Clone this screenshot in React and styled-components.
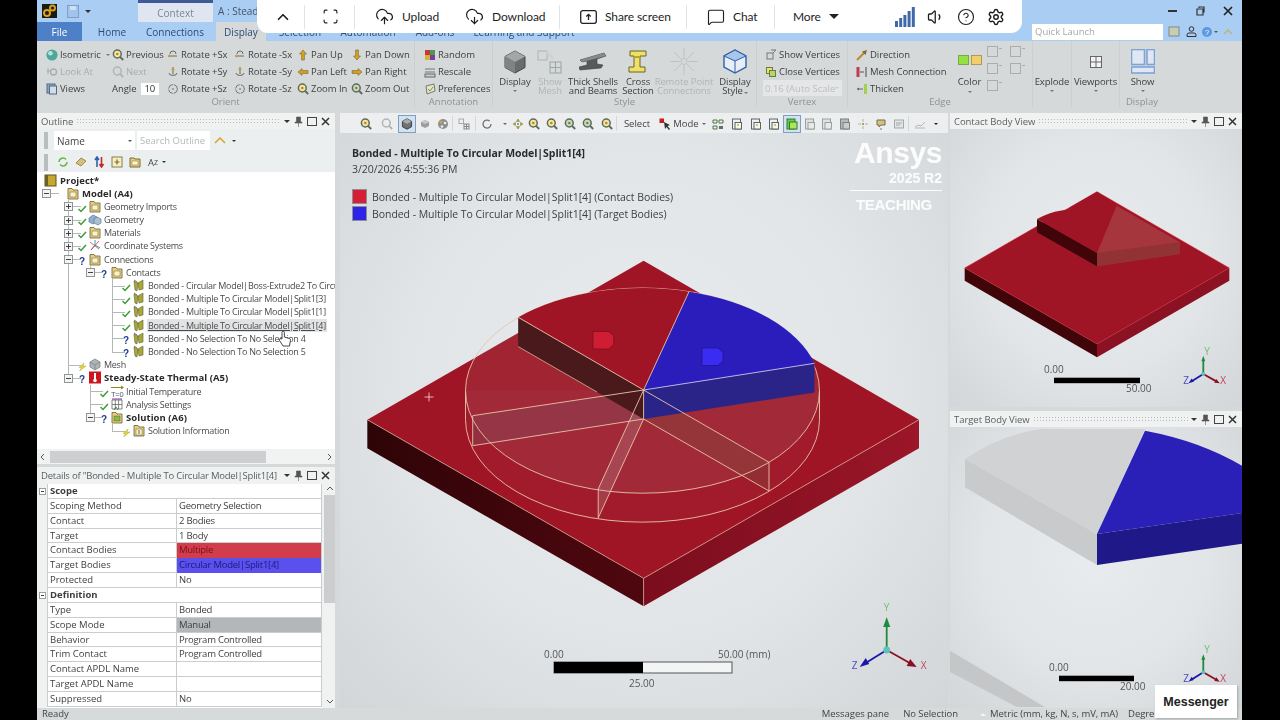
import React from 'react';
import styled, { createGlobalStyle } from 'styled-components';
import { ChevronUp, Scan, CloudUpload, CloudDownload, MessageSquare, Volume1, CircleHelp, Settings } from 'lucide-react';

const UI_FONT = '"Open Sans", "Noto Sans", sans-serif';

const Global = createGlobalStyle`
  html, body { margin: 0; padding: 0; background: #000; overflow: hidden; }
  * { box-sizing: border-box; }
`;

const Screen = styled.div`
  position: relative;
  width: 1280px;
  height: 720px;
  background: #000;
  overflow: hidden;
`;

const Win = styled.div`
  margin-left: 37px;
  width: 1205px;
  height: 720px;
  display: flex;
  flex-direction: column;
  background: #d5d9da;
  font-family: ${UI_FONT};
  font-size: 9.5px;
  color: #3e3e3e;
  overflow: hidden;
  filter: blur(0.35px);
`;

/* ---------- title + tabs ---------- */
const TitleBar = styled.div`
  height: 22px;
  flex: none;
  display: flex;
  align-items: center;
  background: #a9cdf3;
  padding-left: 5px;
`;
const CaretDown = styled.span`
  width: 0;
  height: 0;
  flex: none;
  display: inline-block;
  margin-left: ${p => p.$ml || 0}px;
  border-left: ${p => p.$s || 2.5}px solid transparent;
  border-right: ${p => p.$s || 2.5}px solid transparent;
  border-top: ${p => p.$s || 2.5}px solid ${p => p.$c || '#555'};
`;
const SaveIcon = styled.svg`
  margin: 0 6px 0 10px;
`;
const ContextTab = styled.div`
  width: 75px;
  height: 22px;
  margin-left: 47px;
  background: #dfe6f2;
  border-top: 3px solid #3f5a98;
  color: #7b8794;
  font-size: 10px;
  display: flex;
  align-items: center;
  justify-content: center;
`;
const TitleText = styled.div`
  margin-left: 5px;
  color: #44546a;
  font-size: 10px;
`;
const WinControls = styled.div`
  margin-left: auto;
  display: flex;
`;
const WinBtn = styled.div`
  width: 28px;
  height: 22px;
  display: flex;
  align-items: center;
  justify-content: center;
`;
const TabBar = styled.div`
  height: 19px;
  flex: none;
  display: flex;
  align-items: stretch;
  background: #a9cdf3;
`;
const Tab = styled.div`
  width: ${p => p.$w}px;
  margin-left: ${p => (p.$active ? 8 : 0)}px;
  display: flex;
  align-items: center;
  justify-content: center;
  font-size: 10px;
  color: ${p => (p.$file ? '#fff' : '#2f4a75')};
  background: ${p => (p.$file ? '#4d80c6' : p.$active ? '#d5d9da' : 'transparent')};
`;
const QuickWrap = styled.div`
  margin-left: auto;
  display: flex;
  align-items: center;
  padding-right: 4px;
`;
const QuickLaunch = styled.div`
  width: 131px;
  height: 16px;
  background: #fff;
  color: #a5a8ab;
  font-size: 9.5px;
  padding-left: 3px;
  line-height: 16px;
  margin-right: 3px;
`;

/* ---------- ribbon ---------- */
const Ribbon = styled.div`
  height: 69px;
  flex: none;
  display: flex;
  background: #d5d9da;
`;
const Group = styled.div`
  width: ${p => p.$w}px;
  flex: none;
  padding-top: 5px;
  display: flex;
  flex-direction: column;
  border-right: 1px solid ${p => (p.$last ? 'transparent' : '#cbcfd0')};
  margin-bottom: 3px;
`;
const GroupBody = styled.div`
  height: 50px;
  flex: none;
  display: flex;
  padding-left: ${p => p.$pl || 0}px;
`;
const GroupLabel = styled.div`
  height: 12px;
  line-height: 12px;
  text-align: center;
  font-size: 9.5px;
  color: #8e9293;
`;
const ToolGrid = styled.div`
  display: grid;
  grid-auto-flow: column;
  grid-template-rows: repeat(3, 17px);
  grid-template-columns: ${p => p.$cols};
`;
const Tool = styled.div`
  display: flex;
  align-items: center;
  gap: 2px;
  white-space: nowrap;
  letter-spacing: -0.05px;
  color: ${p => (p.$off ? '#a9acad' : '#3e3e3e')};
`;
const AngleBox = styled.span`
  width: 18px;
  height: 12px;
  background: #fff;
  margin-left: 3px;
  padding-left: 3px;
  line-height: 12px;
  color: #333;
`;
const BigTool = styled.div`
  width: ${p => p.$w}px;
  flex: none;
  display: flex;
  flex-direction: column;
  align-items: center;
  text-align: center;
  white-space: nowrap;
  line-height: 9px;
  letter-spacing: -0.1px;
  color: ${p => (p.$off ? '#b2b5b6' : '#3e3e3e')};
`;
const BigIcon = styled.div`
  height: 31px;
  flex: none;
  display: flex;
  align-items: center;
  justify-content: center;
`;
const BigCaret = styled.div`
  height: 9px;
  display: flex;
  align-items: center;
  justify-content: center;
`;
const AutoScale = styled.div`
  width: 79px;
  height: 16px;
  margin-left: -2px;
  background: #e4e6e7;
  color: #bcbec0;
  display: flex;
  align-items: center;
  justify-content: space-between;
  padding: 0 5px 0 2px;
  white-space: nowrap;
  overflow: hidden;
`;
const VertexStack = styled.div`
  display: grid;
  grid-template-rows: 17px 17px 17px;
  padding-left: 8px;
`;
const ColorCol = styled.div`
  width: 33px;
  flex: none;
  display: flex;
  flex-direction: column;
  align-items: center;
`;
const Swatches = styled.div`
  height: 31px;
  display: flex;
  align-items: center;
  gap: 2px;
`;
const Swatch = styled.span`
  width: 11px;
  height: 10px;
  background: ${p => p.$c};
  border: 1px solid ${p => p.$b};
`;
const EdgeBoxes = styled.div`
  margin: -3px 0 0 1px;
  display: grid;
  grid-template-columns: 23px 23px;
  grid-auto-rows: 17px;
  align-items: center;
`;
const EdgeBox = styled.span`
  position: relative;
  width: 11px;
  height: 11px;
  border: 1px solid #a9adae;
  display: block;
  &::after {
    content: '';
    position: absolute;
    left: 11px;
    top: 1px;
    width: 3px;
    border-top: 1px solid #a9adae;
  }
`;

/* ---------- main ---------- */
const Main = styled.div`
  flex: 1;
  min-height: 0;
  display: flex;
  padding-top: 3px;
`;
const LeftCol = styled.div`
  width: 298px;
  flex: none;
  display: flex;
  flex-direction: column;
`;
const CenterCol = styled.div`
  width: 608px;
  flex: none;
  margin-left: 5px;
  display: flex;
  flex-direction: column;
`;
const RightCol = styled.div`
  width: 292px;
  flex: none;
  margin-left: 2px;
  display: flex;
  flex-direction: column;
`;
const HeaderRow = styled.div`
  height: 16px;
  flex: none;
  display: flex;
  align-items: center;
  background: #f0f2f2;
  padding: 0 5px 0 4px;
  color: #5a5e60;
  font-size: 9.5px;
  white-space: nowrap;
`;
const HeaderTitle = styled.div`
  flex: ${p => (p.$fill ? '0 1 237px' : 'none')};
  letter-spacing: ${p => (p.$fill ? '-0.22px' : '-0.05px')};
  overflow: hidden;
`;
const Grip = styled.div`
  flex: 1;
  height: 7px;
  margin: 0 3px;
  background-image: radial-gradient(#b8bbbc 0.7px, transparent 0.8px);
  background-size: 3px 3px;
`;
const HeaderBtns = styled.div`
  display: flex;
  align-items: center;
  gap: 4px;
  flex: none;
  margin-left: ${p => (p.$auto ? 'auto' : 0)};
`;
const ToolRow = styled.div`
  height: ${p => p.$h}px;
  flex: none;
  display: flex;
  align-items: center;
  background: #ecefef;
  padding-left: 7px;
`;
const RowGrip = styled.div`
  width: 4px;
  height: 17px;
  flex: none;
  margin-right: 6px;
  background-image: radial-gradient(#b6b9ba 0.7px, transparent 0.8px);
  background-size: 2px 2px;
`;
const NameSelect = styled.div`
  width: 81px;
  height: 19px;
  background: #fff;
  color: #444;
  font-size: 10px;
  display: flex;
  align-items: center;
  justify-content: space-between;
  padding: 0 3px;
`;
const SearchBox = styled.div`
  width: 73px;
  height: 19px;
  margin: 0 3px 0 2px;
  background: #fff;
  color: #b4b7b8;
  font-size: 9.5px;
  line-height: 19px;
  padding-left: 3px;
`;
const IconSlot = styled.div`
  width: ${p => p.$w}px;
  flex: none;
  display: flex;
  align-items: center;
  justify-content: center;
  color: #444;
  white-space: nowrap;
  font-size: 9.5px;
  sub { font-size: 7px; }
`;
const TreePane = styled.div`
  position: relative;
  height: 277px;
  flex: none;
  padding-top: 1.5px;
  background: #fff;
  overflow: hidden;
`;
const TreeLine = styled.div`
  height: 13.2px;
  display: flex;
  white-space: nowrap;
  font-size: ${p => (p.$bold ? 9.5 : 9)}px;
  letter-spacing: ${p => (p.$bold ? '0.05px' : '-0.27px')};
  font-weight: ${p => (p.$bold ? 700 : 400)};
  color: ${p => (p.$bold ? '#2a2a2a' : '#4a4a4a')};
`;
const Indent = styled.div`
  position: relative;
  width: 22px;
  flex: none;
  &::before {
    content: ${p => (p.$line ? '""' : 'none')};
    position: absolute;
    left: 9px;
    top: 0;
    bottom: 0;
    border-left: 1px solid #b3b8b9;
  }
`;
const Elbow = styled.div`
  position: relative;
  width: 22px;
  flex: none;
  &::before {
    content: ${p => (p.$line ? '""' : 'none')};
    position: absolute;
    left: 9px;
    top: 0;
    height: ${p => (p.$line === 'half' ? '50%' : '100%')};
    border-left: 1px solid #b3b8b9;
  }
  &::after {
    content: '';
    position: absolute;
    left: 9px;
    right: 0;
    top: 50%;
    border-top: 1px solid #b3b8b9;
  }
`;
const Expander = styled.span`
  position: absolute;
  z-index: 1;
  left: 5px;
  top: 2.5px;
  width: 9px;
  height: 9px;
  background: #f4f4f4;
  border: 1px solid #8f9596;
  &::before {
    content: '';
    position: absolute;
    left: 1px;
    right: 1px;
    top: 3px;
    border-top: 1px solid #444;
  }
  &::after {
    content: ${p => (p.$plus ? '""' : 'none')};
    position: absolute;
    top: 1px;
    bottom: 1px;
    left: 3px;
    border-left: 1px solid #444;
  }
`;
const NodeSvg = styled.svg`
  width: 26px;
  height: 13px;
  flex: none;
  margin-left: -3px;
`;
const NodeText = styled.span`
  line-height: 13px;
  ${p => p.$sel && `
    background: #e2e3e4;
    text-decoration: underline;
    margin-left: -1px;
    padding: 0 1px;
  `}
`;
const HandCursor = styled.svg`
  position: absolute;
  left: 241px;
  top: 158px;
`;
const HScroll = styled.div`
  position: relative;
  height: 15px;
  flex: none;
  display: flex;
  align-items: center;
  justify-content: space-between;
  background: #f1f2f2;
  padding: 0 3px;
  margin-bottom: 3px;
`;
const HThumb = styled.div`
  position: absolute;
  left: 13px;
  width: 216px;
  height: 12px;
  background: #cdcfd0;
`;
const DetailsWrap = styled.div`
  flex: 1;
  min-height: 0;
  display: flex;
  background: #f0f2f2;
  padding-top: 1px;
  overflow: hidden;
`;
const Gutter = styled.div`
  width: 10px;
  flex: none;
  display: flex;
  flex-direction: column;
`;
const GutterCell = styled.div`
  height: 14.87px;
  display: flex;
  align-items: center;
  justify-content: center;
`;
const PlusBox = styled.span`
  width: 7px;
  height: 7px;
  border: 1px solid #9a9fa0;
  background: #fff;
  position: relative;
  &::before {
    content: '';
    position: absolute;
    left: 1px;
    right: 1px;
    top: 2px;
    border-top: 1px solid #444;
  }
`;
const PropTable = styled.div`
  width: 275px;
  flex: none;
  background: #fff;
`;
const PropRow = styled.div`
  height: 14.87px;
  display: grid;
  grid-template-columns: ${p => (p.$section ? '1fr' : '128px 145px')};
  border-bottom: 1px solid #c9cdce;
  border-left: 1px solid #c9cdce;
  border-right: 1px solid #c9cdce;
  line-height: 14.4px;
  white-space: nowrap;
`;
const PropCell = styled.div`
  padding-left: 2px;
  letter-spacing: ${p => (p.$val ? '-0.25px' : '0')};
  border-left: ${p => (p.$val ? '1px solid #c9cdce' : 'none')};
  background: ${p => p.$bg || 'transparent'};
  color: ${p => p.$c || '#3e3e3e'};
  font-weight: ${p => (p.$bold ? 700 : 400)};
`;
const VScroll = styled.div`
  width: 13px;
  flex: none;
  display: flex;
  flex-direction: column;
  align-items: center;
  margin-left: 1px;
  padding: 2px 0 4px;
`;
const VThumb = styled.div`
  width: 12px;
  height: 108px;
  margin: 4px 0 auto;
  background: #cbcdce;
`;

/* ---------- viewports ---------- */
const Viewport = styled.div`
  position: relative;
  flex: ${p => (p.$fixed ? 'none' : 1)};
  height: ${p => (p.$fixed ? `${p.$fixed}px` : 'auto')};
  min-height: 0;
  overflow: hidden;
  background: radial-gradient(ellipse at 50% 45%, #e9ecee 0%, #e2e5e7 55%, #d3d6d8 100%);
`;
const ViewSvg = styled.svg`
  position: absolute;
  left: 0;
  top: 0;
  font-family: ${UI_FONT};
`;
const Caption = styled.div`
  position: relative;
  padding: 12px 0 0 12px;
  color: #3e3e3e;
  font-size: 10.5px;
  letter-spacing: -0.05px;
  line-height: 16px;
`;
const CaptionTitle = styled.div`
  font-weight: 700;
  color: #2b2b2b;
`;
const Legend = styled.div`
  margin-top: 12px;
  display: flex;
  flex-direction: column;
  gap: 2px;
`;
const LegendRow = styled.div`
  display: flex;
  align-items: center;
  gap: 5px;
  height: 15px;
`;
const LegendSwatch = styled.span`
  width: 15px;
  height: 15px;
  background: ${p => p.$c};
  border: 1px solid #8d8f92;
`;
const Logo = styled.div`
  position: absolute;
  right: 6px;
  top: 5px;
  width: 92px;
  color: #fff;
  opacity: 0.92;
  font-family: "Liberation Sans", sans-serif;
  font-weight: 700;
  text-align: right;
  line-height: 1;
`;
const LogoName = styled.div`
  font-size: 30px;
  letter-spacing: -0.4px;
`;
const LogoYear = styled.div`
  font-size: 14px;
  margin-top: 3px;
`;
const LogoRule = styled.div`
  border-top: 1px solid #fff;
  margin: 5px 0 6px;
`;
const LogoEdition = styled.div`
  font-size: 15px;
  text-align: left;
  padding-left: 6px;
  letter-spacing: -0.3px;
`;
const Gap = styled.div`
  height: 4px;
  flex: none;
  background: #d5d9da;
`;
const ViewToolbar = styled(ToolRow)`
  padding: 1px 0 0 16px;
  height: 20px;
  background: #eceeef;
`;
const Highlight = styled.div`
  width: 18px;
  height: 18px;
  flex: none;
  display: flex;
  align-items: center;
  justify-content: center;
  border: 1px solid #7e9fc4;
  background: #d4e2f0;
`;
const ToolSep = styled.span`
  width: 1px;
  height: 15px;
  flex: none;
  margin-right: -1px;
  background: #d5d8d9;
`;

/* ---------- status bar ---------- */
const StatusBar = styled.div`
  height: 12px;
  flex: none;
  display: flex;
  align-items: center;
  background: #d6dadb;
  padding-left: 5px;
  font-size: 9.5px;
  line-height: 12px;
  letter-spacing: -0.05px;
  white-space: nowrap;
  color: #444;
`;
const StatusItem = styled.span`
  margin-left: ${p => p.$ml || 0}px;
`;
const UnitMark = styled.span`
  width: 0;
  height: 0;
  margin-left: 22px;
  margin-right: 4px;
  border-left: 3px solid transparent;
  border-right: 3px solid transparent;
  border-bottom: 3px solid #f4f5f5;
`;

/* ---------- meeting overlay ---------- */
const MeetBar = styled.div`
  position: absolute;
  left: 257px;
  top: 0;
  width: 765px;
  height: 33px;
  background: #fff;
  border-radius: 0 0 11px 11px;
  display: flex;
  align-items: center;
  font-family: Lato, sans-serif;
  font-size: 12px;
  letter-spacing: -0.1px;
  color: #1e1e1e;
`;
const MeetBtn = styled.div`
  width: ${p => p.$w}px;
  flex: none;
  height: 24px;
  display: flex;
  align-items: center;
  gap: 8px;
  padding-left: ${p => p.$pl}px;
  border-right: ${p => (p.$div ? '1px solid #e3e3e3' : 'none')};
`;
const MeetRight = styled.div`
  display: flex;
  align-items: center;
  gap: 12px;
  margin-left: 15px;
`;
const Messenger = styled.div`
  position: absolute;
  left: 1155px;
  top: 685px;
  width: 82px;
  height: 33px;
  background: #fff;
  box-shadow: 1px 1px 2px rgba(0, 0, 0, 0.25);
  display: flex;
  align-items: center;
  justify-content: center;
  font-family: "Liberation Sans", sans-serif;
  font-size: 12.5px;
  font-weight: 700;
  color: #222;
`;
const GlyphSvg = styled.svg`
  flex: none;
`;

/* ---------- small glyphs ---------- */
const zoomGlyph = (ring = '#5f6b58', fill = '#f3e5a6', dot = '#b98a22') => (
  <>
    <circle cx="5.3" cy="5" r="3.9" fill={fill} stroke={ring} strokeWidth="1.5" />
    <circle cx="5.3" cy="5" r="1.3" fill={dot} />
    <path d="M8.2 8l3 3" stroke={ring} strokeWidth="1.8" />
  </>
);
const arrow = (d, c = '#d9a21e') => <path d={d} fill={c} stroke="#5a5230" strokeWidth="0.5" />;

const GLYPHS = {
  sphere: <><circle cx="6" cy="6" r="5.6" fill="#4fa79b" /><circle cx="4.4" cy="4.2" r="2.3" fill="#b4e6de" /></>,
  zoom: zoomGlyph(),
  zoomOff: zoomGlyph('#b1b4b5', 'none', 'none'),
  zoomTeal: zoomGlyph('#5b6b62', '#cfd8b5', '#6f8a55'),
  rotX: <><path d="M3 5a3 3 0 0 1 6 0" fill="none" stroke="#6a6a5a" /><path d="M1 7h9" stroke="#77664a" /><path d="M1 7l2-2v4z" fill="#c8a440" /></>,
  rotY: <><path d="M6 1v7" stroke="#77664a" /><path d="M2 7a4 2.4 0 0 0 8 0" fill="none" stroke="#6a6a5a" /><path d="M6 1l2 3H4z" fill="#c8a440" /></>,
  rotZ: <><circle cx="6" cy="6" r="4.4" fill="none" stroke="#7b7b6b" strokeDasharray="6 1" /><circle cx="6" cy="6" r=".9" fill="#888" /></>,
  panUp: arrow('M6 1l3.5 4H7.4v6H4.6V5H2.5z'),
  panDown: arrow('M6 11L2.5 7h2.1V1h2.8v6h2.1z'),
  panLeft: arrow('M1 6l4-3.5v2.1h6v2.8H5v2.1z'),
  panRight: arrow('M11 6L7 2.5v2.1H1v2.8h6v2.1z'),
  lookAt: <><path d="M1 5h3M2 2v6" stroke="#a9acad" /><circle cx="7.5" cy="6" r="3" fill="none" stroke="#a9acad" strokeWidth="1.3" /></>,
  views: <><rect x="1" y="1" width="8" height="9" fill="#8ea6c2" stroke="#516a85" /><rect x="3.5" y="3" width="7" height="8" fill="#d2dde8" stroke="#516a85" /></>,
  random: <><rect x="1" y="1" width="5" height="5" fill="#c43a3a" /><rect x="6" y="1" width="5" height="5" fill="#4a9a50" /><rect x="1" y="6" width="5" height="5" fill="#d9b232" /><rect x="6" y="6" width="5" height="5" fill="#7a3e9c" /></>,
  rescale: <><path d="M1 3h10M1 6h10" stroke="#777" /><rect x="1" y="8" width="10" height="3" fill="#c9cfd2" stroke="#666" /></>,
  prefs: <><path d="M2 3l8-2 1 7-8 3z" fill="#e8e4c0" stroke="#777" /><path d="M4 6l2 2 3-4" fill="none" stroke="#5b9a50" /></>,
  showVert: <><rect x="2" y="4" width="6" height="6" fill="none" stroke="#777" /><path d="M8 4l3-3M6 1h5" stroke="#777" /></>,
  closeVert: <><rect x="1.5" y="1.5" width="6" height="6" fill="#e8e07a" stroke="#6a7d3a" /><rect x="4.5" y="4.5" width="6" height="6" fill="#b7d46a" stroke="#6a7d3a" /></>,
  direction: <><path d="M1 11l8-8" stroke="#b88d2a" strokeWidth="2" /><path d="M11 1L6 2.5 9.5 6z" fill="#7b6b3a" /></>,
  meshConn: <><rect x="0.5" y="1" width="3" height="10" fill="#c23b55" /><path d="M4 6h4" stroke="#555" /><rect x="9" y="1" width="2" height="10" fill="#8b9295" /></>,
  thicken: <><path d="M1 6h6" stroke="#666" /><path d="M3 4.5L1 6l2 1.5" fill="#666" /><rect x="8" y="1" width="3" height="10" fill="#9ed44a" /></>,
  refresh: <path d="M2 6a4 4 0 0 1 7-2.6M10 6a4 4 0 0 1-7 2.6" fill="none" stroke="#6cb84a" strokeWidth="1.5" />,
  eraser: <path d="M1 7l5-5 5 3-5 5z" fill="#d6bf7e" stroke="#a08b50" />,
  sort: <><path d="M4 11V2M2 4l2-3 2 3" fill="none" stroke="#2a62b8" strokeWidth="1.6" /><path d="M8.5 1v9M6.5 8l2 3 2-3" fill="none" stroke="#c62828" strokeWidth="1.6" /></>,
  plusBox: <><rect x="1" y="1" width="10" height="10" fill="#f6eec4" stroke="#8a7d45" /><path d="M3.5 6h5M6 3.5v5" stroke="#7a6a2a" strokeWidth="1.2" /></>,
  folder: <><path d="M1 3V2h4l1 1h5v8H1z" fill="#e6cf83" stroke="#7b6b35" /><rect x="3" y="5" width="6" height="4" fill="#fff7d2" stroke="#7b6b35" strokeWidth=".5" /></>,
  cube: <><path d="M6 .8l4.6 2.5v5.4L6 11.2 1.4 8.700V3.3z" fill="#6d7173" stroke="#3f4244" /><path d="M6 6L1.4 3.3 6 .8l4.6 2.5z" fill="#a7abad" /></>,
  cubeLt: <><path d="M6 2l4 2v4l-4 2-4-2V4z" fill="#9a9ea0" /><path d="M6 6L2 4l4-2 4 2z" fill="#c6c9cb" /></>,
  render: <><circle cx="6" cy="6" r="5" fill="#8b8f90" /><circle cx="4" cy="4" r="1.5" fill="#d8a23a" /><circle cx="8" cy="5" r="1.3" fill="#eee" /><circle cx="5" cy="8.5" r="1.3" fill="#eee" /></>,
  meshMini: <><rect x="1" y="1" width="4.5" height="4.5" fill="none" stroke="#aaa" /><rect x="6" y="6" width="5" height="5" fill="none" stroke="#888" /><path d="M8.5 6v5M6 8.5h5" stroke="#888" /></>,
  rotate: <path d="M10 6a4 4 0 1 1-1.4-3" fill="none" stroke="#6f7172" strokeWidth="1.3" />,
  panAll: <><path d="M6 1l1.6 2.5H4.4zM6 11l1.6-2.5H4.4zM1 6l2.5-1.6v3.2zM11 6L8.5 4.4v3.2z" fill="#c9a22d" stroke="#6d5f25" strokeWidth=".4" /><circle cx="6" cy="6" r="1" fill="#3a8" /></>,
  mode: <><rect x="0.5" y="0.5" width="4.5" height="4.5" fill="#c41d1d" /><path d="M5 4l6 3-2.5 1L11 11l-1 1-2.5-3L6 11z" fill="#333" /></>,
  filterA: <><path d="M1 2h4v3H1zM7 2h4v3H7zM1 8h4v3H1z" fill="none" stroke="#4a7a44" /><path d="M7 8h4v3H7z" fill="#6a6a6a" /></>,
  page: <><rect x="1.5" y="1" width="8" height="10" fill="#eef1f1" stroke="#5c6566" /><rect x="4" y="4.5" width="6.5" height="6.5" fill="#f7f7e8" stroke="#5c6566" /><path d="M6 7h2" stroke="#a08b2a" /></>,
  pageOn: <><rect x="1" y="1" width="8" height="10" fill="#66cc55" stroke="#2e7a2a" /><rect x="3.5" y="4" width="7.5" height="7" fill="#a8e65a" stroke="#2e7a2a" /></>,
  pageDim: <><rect x="1.5" y="1" width="8" height="10" fill="#dfe2e3" stroke="#9aa0a1" /><rect x="4" y="4.5" width="6.5" height="6.5" fill="#e8eaea" stroke="#9aa0a1" /></>,
  pageDark: <><rect x="1.5" y="1" width="8" height="10" fill="#b7babb" stroke="#7a7f80" /><rect x="4" y="4.5" width="6.5" height="6.5" fill="#c9cbcc" stroke="#7a7f80" /></>,
  spark: <><path d="M6 1v3M6 8v3M1 6h3M8 6h3" stroke="#b8b48a" strokeWidth="1" /><circle cx="6" cy="6" r="1" fill="#5fa04a" /></>,
  flag: <><path d="M2 2h8v5H6l-2 2V7H2z" fill="#d8c26a" stroke="#6d6d6d" /><path d="M5 11h2" stroke="#777" /></>,
  chart: <><rect x="1.5" y="2" width="9" height="8" fill="#e2e4e5" stroke="#a5a9aa" /><path d="M3 5h6M3 7h4" stroke="#a5a9aa" /></>,
  graph: <path d="M1 10h10M1 9l3-2 3 1 4-4" fill="none" stroke="#b4b7b8" />,
};

const Glyph = ({ name, size = 12 }) => (
  <GlyphSvg width={size} height={size} viewBox="0 0 12 12">{GLYPHS[name]}</GlyphSvg>
);

const HeaderIcons = ({ auto }) => (
  <HeaderBtns $auto={auto}>
    <CaretDown $s={3} $c="#333" />
    <svg width="9" height="11" viewBox="0 0 9 11"><path d="M2.5 1h4v5h1.5v1H1V6h1.5zM4.5 7v4" fill="#555" stroke="#555" strokeWidth=".6" /></svg>
    <svg width="10" height="9" viewBox="0 0 10 9"><rect x=".5" y=".5" width="9" height="8" fill="none" stroke="#444" /></svg>
    <svg width="9" height="9" viewBox="0 0 9 9"><path d="M1 1l7 7M8 1L1 8" stroke="#333" strokeWidth="1.5" /></svg>
  </HeaderBtns>
);

/* ---------- ribbon contents ---------- */
const ORIENT = [
  ['sphere', 'Isometric', false], ['lookAt', 'Look At', true], ['views', 'Views', false],
  ['zoom', 'Previous', false], ['zoomOff', 'Next', true], [null, 'Angle', false],
  ['rotX', 'Rotate +Sx'], ['rotY', 'Rotate +Sy'], ['rotZ', 'Rotate +Sz'],
  ['rotX', 'Rotate -Sx'], ['rotY', 'Rotate -Sy'], ['rotZ', 'Rotate -Sz'],
  ['panUp', 'Pan Up'], ['panLeft', 'Pan Left'], ['zoom', 'Zoom In'],
  ['panDown', 'Pan Down'], ['panRight', 'Pan Right'], ['zoomTeal', 'Zoom Out'],
];

const ShowMeshIcon = () => (
  <svg width="26" height="26" viewBox="0 0 26 26">
    <rect x="1" y="2" width="9" height="9" fill="none" stroke="#aeb2b3" />
    <path d="M10 2l6 8" stroke="#d0d3d4" strokeWidth="3" />
    <rect x="13" y="13" width="11" height="11" fill="none" stroke="#9ea3a4" />
    <path d="M18.5 13v11M13 18.5h11" stroke="#9ea3a4" />
  </svg>
);
const DisplayIcon = () => (
  <svg width="22" height="24" viewBox="0 0 22 24">
    <path d="M11 1l10 5.5v11L11 23 1 17.5V6.5z" fill="#6a6c6c" stroke="#444" />
    <path d="M11 12L1 6.5 11 1l10 5.5z" fill="#a4a7a7" />
    <path d="M11 12v11L1 17.5V6.5z" fill="#818383" />
  </svg>
);
const BeamIcon = () => (
  <svg width="28" height="20" viewBox="0 0 28 20">
    <path d="M1 8l24-7 2 3-9 3v5l6 1-2 3-21 2-1-3 8-2v-4L3 10z" fill="#565a5c" stroke="#3a3c3e" strokeWidth=".6" />
    <path d="M1 8l24-7 2 3-24 6z" fill="#858a8c" />
  </svg>
);
const SectionIcon = () => (
  <svg width="20" height="25" viewBox="0 0 20 25">
    <path d="M2 2h16v5h-6v11h5v5H1v-5h5V7H2z" fill="#efe06a" stroke="#6b6420" strokeWidth="1" />
    <path d="M6 7h6v2H6z" fill="#b3a635" />
  </svg>
);
const RemoteIcon = () => (
  <svg width="28" height="27" viewBox="0 0 28 27" stroke="#bfc2c3" strokeWidth="1">
    <path d="M14 0v10M14 17v10M0 13.5h10M18 13.5h10M4 4l7 7M17 16l7 7M24 4l-7 7M11 16l-7 7" />
    <circle cx="14" cy="13.5" r="3" fill="none" />
  </svg>
);
const StyleIcon = () => (
  <svg width="24" height="25" viewBox="0 0 24 25">
    <path d="M12 1l11 6v11l-11 6L1 18V7z" fill="#e7eef8" stroke="#2f5fa5" strokeWidth="1.4" />
    <path d="M12 12L1 7l11-6 11 6z" fill="#a9c6ea" stroke="#2f5fa5" />
    <path d="M12 12v12" stroke="#2f5fa5" />
  </svg>
);
const ViewportsIcon = () => (
  <svg width="12" height="12" viewBox="0 0 12 12"><rect x=".5" y=".5" width="11" height="11" fill="#f2f3f3" stroke="#666" /><path d="M6 .5v11M.5 6h11" stroke="#666" /></svg>
);
const ShowIcon = () => (
  <svg width="24" height="25" viewBox="0 0 24 25">
    <rect x=".5" y=".5" width="13" height="15" fill="#dfe7f3" stroke="#7fa3d6" strokeWidth="1.6" />
    <rect x="16" y=".5" width="7.5" height="15" fill="#dfe7f3" stroke="#7fa3d6" strokeWidth="1.6" />
    <rect x=".5" y="18" width="23" height="6" fill="#dfe7f3" stroke="#7fa3d6" strokeWidth="1.6" />
  </svg>
);

const StyleTools = [
  { w: 36, label: 'Display', icon: <DisplayIcon />, caret: true },
  { w: 34, label: <>Show<br />Mesh</>, icon: <ShowMeshIcon />, off: true },
  { w: 52, label: <>Thick Shells<br />and Beams</>, icon: <BeamIcon /> },
  { w: 38, label: <>Cross<br />Section</>, icon: <SectionIcon /> },
  { w: 54, label: <>Remote Point<br />Connections</>, icon: <RemoteIcon />, off: true },
  { w: 48, label: <>Display<br />Style<CaretDown $c="#777" $ml={1} /></>, icon: <StyleIcon /> },
];

const RibbonBar = () => (
  <Ribbon>
    <Group $w={378}>
      <GroupBody $pl={9}>
        <ToolGrid $cols="66px 55px 67px 63px 54px auto">
          {ORIENT.map(([icon, label, off], i) => (
            <Tool key={i} $off={off}>
              {icon && <Glyph name={icon} />}
              {label}
              {i === 0 && <CaretDown $c="#777" $ml={3} />}
              {i === 5 && <AngleBox>10</AngleBox>}
            </Tool>
          ))}
        </ToolGrid>
      </GroupBody>
      <GroupLabel>Orient</GroupLabel>
    </Group>
    <Group $w={78}>
      <GroupBody $pl={9}>
        <ToolGrid $cols="auto">
          <Tool><Glyph name="random" />Random</Tool>
          <Tool><Glyph name="rescale" />Rescale</Tool>
          <Tool><Glyph name="prefs" />Preferences</Tool>
        </ToolGrid>
      </GroupBody>
      <GroupLabel>Annotation</GroupLabel>
    </Group>
    <Group $w={264}>
      <GroupBody $pl={4}>
        {StyleTools.map((t, i) => (
          <BigTool key={i} $w={t.w} $off={t.off}>
            <BigIcon>{t.icon}</BigIcon>
            <span>{t.label}</span>
            {t.caret && <BigCaret><CaretDown $c="#777" /></BigCaret>}
          </BigTool>
        ))}
      </GroupBody>
      <GroupLabel>Style</GroupLabel>
    </Group>
    <Group $w={91}>
      <GroupBody>
        <VertexStack>
          <Tool><Glyph name="showVert" />Show Vertices</Tool>
          <Tool><Glyph name="closeVert" />Close Vertices</Tool>
          <AutoScale>0.16 (Auto Scale<CaretDown $c="#c9cbcc" /></AutoScale>
        </VertexStack>
      </GroupBody>
      <GroupLabel>Vertex</GroupLabel>
    </Group>
    <Group $w={185}>
      <GroupBody $pl={8}>
        <ToolGrid $cols="97px">
          <Tool><Glyph name="direction" />Direction</Tool>
          <Tool><Glyph name="meshConn" />Mesh Connection</Tool>
          <Tool><Glyph name="thicken" />Thicken</Tool>
        </ToolGrid>
        <ColorCol>
          <Swatches><Swatch $c="#93e240" $b="#7da64a" /><Swatch $c="#efce6c" $b="#b09a50" /></Swatches>
          Color
          <BigCaret><CaretDown $c="#777" /></BigCaret>
        </ColorCol>
        <EdgeBoxes>
          <EdgeBox /><EdgeBox /><EdgeBox /><EdgeBox /><EdgeBox />
        </EdgeBoxes>
      </GroupBody>
      <GroupLabel>Edge</GroupLabel>
    </Group>
    <Group $w={39}>
      <GroupBody>
        <BigTool $w={38}><BigIcon />Explode<BigCaret><CaretDown $c="#777" /></BigCaret></BigTool>
      </GroupBody>
    </Group>
    <Group $w={48}>
      <GroupBody>
        <BigTool $w={47}><BigIcon><ViewportsIcon /></BigIcon>Viewports<BigCaret><CaretDown $c="#777" /></BigCaret></BigTool>
      </GroupBody>
    </Group>
    <Group $w={45} $last>
      <GroupBody>
        <BigTool $w={45}><BigIcon><ShowIcon /></BigIcon>Show<BigCaret><CaretDown $c="#777" /></BigCaret></BigTool>
      </GroupBody>
      <GroupLabel>Display</GroupLabel>
    </Group>
  </Ribbon>
);

/* ---------- tree ---------- */
const STATUS = {
  check: <path d="M.5 9l2.5 2.5L8 6" fill="none" stroke="#3f9a3a" strokeWidth="1.5" />,
  q: <text x="1" y="12" fontSize="10" fontWeight="700" fill="#1f3f8f" fontFamily="Liberation Sans">?</text>,
  bolt: <path d="M6 5L1 9.5h2.5L1.5 13 8 8H5z" fill="#dfd43a" stroke="#a89e20" strokeWidth=".4" />,
};
const folderBase = <path d="M12 3V1.5h4l1 1.5h5v9H12z" fill="#e6cf83" stroke="#6d5f2c" strokeWidth=".8" />;
const NODE = {
  project: <><rect x="11" y="1" width="11" height="11" fill="#c7a72f" stroke="#5d5220" /><rect x="11" y="1" width="3" height="11" fill="#6d5f25" /></>,
  folder: <>{folderBase}<rect x="14" y="5" width="6" height="5" fill="#f8f2cf" stroke="#6d5f2c" strokeWidth=".5" /></>,
  geometry: <><path d="M11 5l4-3 4 2v4l-4 3-4-2z" fill="#8fb0d0" stroke="#4c6b8d" strokeWidth=".6" /><path d="M16 6l3-2 4 2v4l-3 2-4-2z" fill="#aebfd0" stroke="#4c6b8d" strokeWidth=".6" /></>,
  coords: <><path d="M17 1v5M13 11l4-5 5 3" fill="none" stroke="#2aa9a0" /><path d="M12 3l9 7M21 2l-8 9" stroke="#c93a5a" strokeWidth=".8" /></>,
  contact: <><path d="M12 2l4 2-1 8-2-1zM21 1l-5 3 1 7 4-1z" fill="#a8a83a" stroke="#5f5f2a" strokeWidth=".6" /><path d="M12 1l3 2" stroke="#777" /></>,
  mesh: <><path d="M12 4l5-3 5 3v5l-5 3-5-3z" fill="#aeb4b8" stroke="#727a7e" strokeWidth=".7" /><path d="M12 4l5 3 5-3M17 7v5" stroke="#727a7e" strokeWidth=".6" fill="none" /></>,
  thermal: <><rect x="11" y="0.5" width="12" height="12" fill="#cc1520" /><rect x="16" y="2" width="2" height="7" fill="#fff" /><circle cx="17" cy="9.5" r="1.8" fill="#fff" /></>,
  temp: <><path d="M11 2.500h10" stroke="#8a8a2a" /><path d="M24 2.500l-3-2v4z" fill="#8a8a2a" /><text x="11" y="12" fontSize="7.5" fill="#4a5a6a" fontFamily="Liberation Sans">T=0</text></>,
  settings: <><path d="M12 2h10v9H12zM15.3 2v9M18.6 2v9M12 6.5h10" fill="none" stroke="#555" strokeWidth=".7" /><path d="M12 1h10" stroke="#7a3a9a" /><path d="M14 12l2-3 2 3" stroke="#3a8a3a" fill="none" /></>,
  solution: <>{folderBase}<rect x="14" y="5" width="6" height="5" fill="#8ab84a" stroke="#4d6a2a" strokeWidth=".5" /></>,
  info: <>{folderBase}<rect x="14" y="5" width="6" height="6" fill="#fbf7dc" stroke="#6d5f2c" strokeWidth=".5" /><path d="M17 6v4" stroke="#555" /></>,
};

const BONDED = 'Bonded - ';
const TREE = [
  { d: -1, icon: 'project', text: 'Project*', bold: true },
  { d: 0, exp: 'minus', icon: 'folder', text: 'Model (A4)', bold: true },
  { d: 1, conn: 'full', exp: 'plus', st: 'check', icon: 'folder', text: 'Geometry Imports' },
  { d: 1, conn: 'full', exp: 'plus', st: 'check', icon: 'geometry', text: 'Geometry' },
  { d: 1, conn: 'full', exp: 'plus', st: 'check', icon: 'folder', text: 'Materials' },
  { d: 1, conn: 'full', exp: 'plus', st: 'check', icon: 'coords', text: 'Coordinate Systems' },
  { d: 1, conn: 'full', exp: 'minus', st: 'q', icon: 'folder', text: 'Connections' },
  { d: 2, lines: [0, 1], conn: 'half', exp: 'minus', st: 'q', icon: 'folder', text: 'Contacts' },
  { d: 3, lines: [0, 1, 0], conn: 'full', st: 'check', icon: 'contact', text: BONDED + 'Circular Model|Boss-Extrude2 To Circular Model|Split1[1]' },
  { d: 3, lines: [0, 1, 0], conn: 'full', st: 'check', icon: 'contact', text: BONDED + 'Multiple To Circular Model|Split1[3]' },
  { d: 3, lines: [0, 1, 0], conn: 'full', st: 'check', icon: 'contact', text: BONDED + 'Multiple To Circular Model|Split1[1]' },
  { d: 3, lines: [0, 1, 0], conn: 'full', st: 'check', icon: 'contact', text: BONDED + 'Multiple To Circular Model|Split1[4]', sel: true },
  { d: 3, lines: [0, 1, 0], conn: 'full', st: 'q', icon: 'contact', text: BONDED + 'No Selection To No Selection 4' },
  { d: 3, lines: [0, 1, 0], conn: 'half', st: 'q', icon: 'contact', text: BONDED + 'No Selection To No Selection 5' },
  { d: 1, conn: 'full', st: 'bolt', icon: 'mesh', text: 'Mesh' },
  { d: 1, conn: 'half', exp: 'minus', st: 'q', icon: 'thermal', text: 'Steady-State Thermal (A5)', bold: true },
  { d: 2, lines: [0, 0], conn: 'full', st: 'check', icon: 'temp', text: 'Initial Temperature' },
  { d: 2, lines: [0, 0], conn: 'full', st: 'check', icon: 'settings', text: 'Analysis Settings' },
  { d: 2, lines: [0, 0], conn: 'half', exp: 'minus', st: 'q', icon: 'solution', text: 'Solution (A6)', bold: true },
  { d: 3, lines: [0, 0, 0], conn: 'half', st: 'bolt', icon: 'info', text: 'Solution Information' },
];

const TreeRow = ({ row }) => (
  <TreeLine $bold={row.bold}>
    {(row.lines || (row.d > 0 ? [0] : [])).map((on, i) => <Indent key={i} $line={on} />)}
    {row.d >= 0 && (
      <Elbow $line={row.conn}>{row.exp && <Expander $plus={row.exp === 'plus'} />}</Elbow>
    )}
    <NodeSvg viewBox="0 0 26 13">{row.st && STATUS[row.st]}{NODE[row.icon]}</NodeSvg>
    <NodeText $sel={row.sel}>{row.text}</NodeText>
  </TreeLine>
);

/* ---------- details ---------- */
const RED_CELL = { $bg: '#d13d4b', $c: '#7c0f1c' };
const BLUE_CELL = { $bg: '#5a50ee', $c: '#1c1a78' };
const DETAILS = [
  { section: 'Scope' },
  { k: 'Scoping Method', v: 'Geometry Selection' },
  { k: 'Contact', v: '2 Bodies' },
  { k: 'Target', v: '1 Body' },
  { k: 'Contact Bodies', v: 'Multiple', cell: RED_CELL },
  { k: 'Target Bodies', v: 'Circular Model|Split1[4]', cell: BLUE_CELL },
  { k: 'Protected', v: 'No' },
  { section: 'Definition' },
  { k: 'Type', v: 'Bonded' },
  { k: 'Scope Mode', v: 'Manual', cell: { $bg: '#b4b7ba' } },
  { k: 'Behavior', v: 'Program Controlled' },
  { k: 'Trim Contact', v: 'Program Controlled' },
  { k: 'Contact APDL Name', v: '' },
  { k: 'Target APDL Name', v: '' },
  { k: 'Suppressed', v: 'No' },
];

/* ---------- drawings ---------- */
const Triad = ({ x, y, s = 1 }) => {
  const small = s < 1;
  return (
    <g>
      <path d={`M${x} ${y}V${y - 26 * s}`} stroke="#1f8a3c" strokeWidth="1.8" />
      <path d={`M${x} ${y - 33 * s}l${3.5 * s} ${10 * s}h${-7 * s}z`} fill="#1f8a3c" />
      <path d={`M${x} ${y}L${x - 21 * s} ${y + 13 * s}`} stroke="#1717a8" strokeWidth="1.8" />
      <path d={`M${x - 27 * s} ${y + 17 * s}l${6 * s} ${-9 * s}l${3.5 * s} ${6 * s}z`} fill="#1717a8" />
      <path d={`M${x} ${y}L${x + 23 * s} ${y + 13 * s}`} stroke="#8a1020" strokeWidth="1.8" />
      <path d={`M${x + 30 * s} ${y + 17 * s}l${-10 * s} ${-1 * s}l${3.5 * s} ${-7 * s}z`} fill="#8a1020" />
      <circle cx={x} cy={y} r={3.5 * s} fill="#5fc2b8" />
      <text x={x + (small ? 1 : -3)} y={y - (small ? 19 : 39)} fill="#6fbf6f" fontSize="10">Y</text>
      <text x={x - (small ? 20 : 35)} y={y + (small ? 10 : 19)} fill="#4a4ac8" fontSize="10">Z</text>
      <text x={x + (small ? 17 : 34)} y={y + (small ? 10 : 19)} fill="#c8405a" fontSize="10">X</text>
    </g>
  );
};

const EDGE = '#e8c5a8';
const MainModel = () => (
  <ViewSvg width="608" height="574" viewBox="340 134 608 574">
    <defs>
      <linearGradient id="plateL" x1="0" x2="1" y1="0" y2="0">
        <stop offset="0" stopColor="#2e0407" /><stop offset="1" stopColor="#50070f" />
      </linearGradient>
      <linearGradient id="plateR" x1="0" x2="1" y1="0" y2="0">
        <stop offset="0" stopColor="#7a0d1d" /><stop offset="1" stopColor="#9b1628" />
      </linearGradient>
      <clipPath id="plateTop">
        <path d="M643.6 261.7L919 420.7 643.6 579.3 367.3 420.7z" />
      </clipPath>
    </defs>
    <path d="M367.3 420.7L643.6 579.3V607.3L367.3 449.3z" fill="url(#plateL)" />
    <path d="M919 420.7L643.6 579.3V607.3L919 449.3z" fill="url(#plateR)" />
    <path d="M643.6 261.7L919 420.7 643.6 579.3 367.3 420.7z" fill="#a01526" />
    <path d="M367.3 420.7L643.6 579.3 919 420.7M643.6 579.3V607.3" fill="none" stroke={EDGE} strokeOpacity=".75" strokeWidth=".8" />

    {/* transparent part of the disc */}
    <g clipPath="url(#plateTop)">
      <path d="M465.5 391.6V420.6A177 102.6 0 0 0 819.5 420.6V391.6z" fill="#c9a0a0" fillOpacity=".05" />
      <ellipse cx="642.5" cy="391.6" rx="177" ry="102.6" fill="#a88a8a" fillOpacity=".13" />
      <path d="M643.6 391L472.7 416.7V446.7L643.6 420z" fill="#8a3f50" fillOpacity=".55" />
      <path d="M643.6 391L769 463.3V492L643.6 420z" fill="#88403a" fillOpacity=".5" />
      <path d="M643.6 391L598.2 490V519L643.6 420z" fill="#b89098" fillOpacity=".28" />
    </g>
    <ellipse cx="642.5" cy="391.6" rx="177" ry="102.6" fill="none" stroke={EDGE} strokeWidth=".9" />
    <path d="M465.5 391.6V420.6A177 102.6 0 0 0 819.5 420.6V391.6" fill="none" stroke={EDGE} strokeWidth=".9" />

    {/* solid sectors */}
    <path d="M518.2 318.3V347.6L643.6 420V391z" fill="#4a191c" />
    <path d="M643.6 391L814.5 364.3V393.5L643.6 420z" fill="#2a2488" />
    <path d="M643.6 391L518.2 318.3A177 102.6 0 0 1 689 292.7z" fill="#a01526" />
    <path d="M643.6 391L689 292.7A177 102.6 0 0 1 814.5 364.3z" fill="#2a1dbb" />
    <path d="M518.2 318.3L643.6 391 689 292.7" fill="none" stroke={EDGE} strokeWidth=".9" />
    <path d="M643.6 391L814.5 364.3" fill="none" stroke="#c8c8ee" strokeWidth=".9" />
    <path d="M518.2 347.6L597 393" fill="none" stroke={EDGE} strokeWidth=".7" />

    {/* wedge edges run across the solids */}
    <path d="M643.6 391L472.7 416.7V446.7L643.6 420M643.6 391L769 463.3V492L643.6 420M643.6 391L598.2 490V519L643.6 420M643.6 391V420" fill="none" stroke={EDGE} strokeWidth=".9" />

    <path d="M593 332.5H609L613.8 337V345.5L609 350H593z" fill="#cf1d33" stroke="#6d1019" strokeWidth=".7" />
    <path d="M702 349H718L723 353.5V362L718 366.5H702z" fill="#3a2cf2" stroke="#1d1780" strokeWidth=".7" />
    <path d="M429 393.5v9M424.5 398h9" stroke="#f3d9cf" strokeWidth=".8" />

    {/* scale bar */}
    <rect x="554" y="663" width="178" height="11" fill="#f3f4f4" stroke="#555" />
    <rect x="554" y="663" width="89" height="11" fill="#000" />
    <text x="544" y="659" fill="#555" fontSize="10">0.00</text>
    <text x="718" y="659" fill="#555" fontSize="10">50.00 (mm)</text>
    <text x="629" y="688" fill="#555" fontSize="10">25.00</text>
    <Triad x={886.7} y={651} />
  </ViewSvg>
);

const ContactModel = () => (
  <ViewSvg width="292" height="278" viewBox="950 130 292 278">
    <path d="M964.7 269L1097 345v13.3L964.7 281.7z" fill="#3f0509" />
    <path d="M1229.3 269L1097 345v13.3l132.3-76.6z" fill="#8a1222" />
    <path d="M1097 192.7L1229.3 269 1097 345 964.7 269z" fill="#a01526" stroke="#d02030" strokeWidth=".5" />
    <path d="M1037 220v13.3L1097 267.3V254z" fill="#3f0509" />
    <path d="M1037 220Q1050 213 1060 211.700T1070 208.300L1097 192.700 1116.700 205 1097 254z" fill="#a01526" />
    <path d="M1116.700 206.700L1180 243.300 1180 255 1097 267.300V254z" fill="#a5363e" />
    <path d="M1097 254L1180 243.300V255L1097 267.300z" fill="#913235" />
    <text x="1044" y="374" fill="#555" fontSize="10">0.00</text>
    <rect x="1054" y="378.7" width="86" height="5.5" fill="#000" />
    <text x="1126" y="393" fill="#555" fontSize="10">50.00</text>
    <Triad x={1203.3} y={375} s={0.55} />
  </ViewSvg>
);

const TargetModel = () => (
  <ViewSvg width="292" height="280" viewBox="950 428 292 280">
    <path d="M965 460Q1000 436 1040 430H1145L1097 535z" fill="#d0d2d3" />
    <path d="M965 460V488.3L1097 566V535z" fill="#c8cacb" />
    <path d="M950 651.7L1045 708H1017L950 673z" fill="#c4c6c7" />
    <path d="M1097 535L1145 431.700Q1200 442 1242 466.700V514z" fill="#2a20b8" />
    <path d="M1097 535L1242 514V544.700L1097 566z" fill="#1f1888" />
    <text x="1049" y="672" fill="#555" fontSize="10">0.00</text>
    <rect x="1059" y="676.7" width="75" height="5.5" fill="#000" />
    <text x="1120" y="691" fill="#555" fontSize="10">20.00</text>
    <Triad x={1203.3} y={673.3} s={0.55} />
  </ViewSvg>
);

const VIEW_TOOLS = [
  ['cubeLt', 18], ['render', 18], ['sep'], ['meshMini', 23], ['sep'], ['rotate', 23], ['caret', 13], ['panAll', 14],
  ['zoom', 18], ['zoom', 17], ['zoomTeal', 19], ['zoomTeal', 18], ['zoom', 19], ['sep'],
];
const VIEW_TOOLS_2 = [
  ['filterA', 20], ['page', 18], ['page', 19], ['page', 18],
];
const VIEW_TOOLS_3 = [
  ['pageDim', 17], ['pageDim', 18], ['pageDark', 17], ['spark', 19], ['flag', 18], ['chart', 18], ['sep'], ['graph', 24],
];

const ToolGlyph = ({ name, w }) => {
  if (name === 'sep') return <ToolSep />;
  return <IconSlot $w={w}>{name === 'caret' ? <CaretDown $c="#666" /> : <Glyph name={name} />}</IconSlot>;
};

export default function App() {
  return (
    <Screen>
      <Global />
      <Win>
        <TitleBar>
          <svg width="15" height="14" viewBox="0 0 15 14">
            <rect width="15" height="14" fill="#1a1a10" />
            <circle cx="5" cy="9" r="3" fill="none" stroke="#e0a020" strokeWidth="2" />
            <circle cx="10.5" cy="4" r="2.5" fill="none" stroke="#d0a020" strokeWidth="2" />
          </svg>
          <SaveIcon width="12" height="13" viewBox="0 0 12 13">
            <rect x=".5" y=".5" width="11" height="12" fill="#a3c4ea" stroke="#7d9fc9" />
            <rect x="3" y="1" width="6" height="4" fill="#cfe0f4" />
          </SaveIcon>
          <CaretDown $s={3} $c="#333" />
          <ContextTab>Context</ContextTab>
          <TitleText>A : Steady-State Thermal - Mechanical</TitleText>
          <WinControls>
            <WinBtn><svg width="9" height="2"><rect width="9" height="2" fill="#333" /></svg></WinBtn>
            <WinBtn><svg width="9" height="10" viewBox="0 0 9 10"><path d="M3 2V1h5v5H7M1 3h6v6H1z" fill="none" stroke="#333" strokeWidth="1.2" /></svg></WinBtn>
            <WinBtn><svg width="10" height="10" viewBox="0 0 10 10"><path d="M1 1l8 8M9 1L1 9" stroke="#222" strokeWidth="1.7" /></svg></WinBtn>
          </WinControls>
        </TitleBar>
        <TabBar>
          <Tab $w={45} $file>File</Tab>
          <Tab $w={60}>Home</Tab>
          <Tab $w={66}>Connections</Tab>
          <Tab $w={50} $active>Display</Tab>
          <Tab $w={68}>Selection</Tab>
          <Tab $w={68}>Automation</Tab>
          <Tab $w={66}>Add-ons</Tab>
          <Tab $w={112}>Learning and Support</Tab>
          <QuickWrap>
            <QuickLaunch>Quick Launch</QuickLaunch>
            <IconSlot $w={16}><svg width="12" height="11" viewBox="0 0 12 11"><rect x="1" y="1" width="10" height="9" fill="#c8cdb0" stroke="#7c8a8a" /></svg></IconSlot>
            <IconSlot $w={18}><svg width="11" height="11" viewBox="0 0 11 11"><circle cx="5.5" cy="3" r="2.3" fill="none" stroke="#333" /><path d="M1 10.5V9q0-2 2-2h5q2 0 2 2v1.5z" fill="none" stroke="#333" /></svg></IconSlot>
            <IconSlot $w={14}><svg width="10" height="10" viewBox="0 0 10 10"><circle cx="5" cy="5" r="5" fill="#5b9ae0" /><text x="3" y="8" fontSize="7.5" fill="#fff" fontFamily="Liberation Sans">?</text></svg></IconSlot>
            <CaretDown $c="#555" />
            <IconSlot $w={20}><svg width="10" height="6" viewBox="0 0 10 6"><path d="M1 5l4-4 4 4" fill="none" stroke="#b9b77a" strokeWidth="1.5" /></svg></IconSlot>
          </QuickWrap>
        </TabBar>

        <RibbonBar />

        <Main>
          <LeftCol>
            <HeaderRow>
              <HeaderTitle>Outline</HeaderTitle>
              <Grip />
              <HeaderIcons />
            </HeaderRow>
            <ToolRow $h={23}>
              <RowGrip />
              <NameSelect>Name<CaretDown $c="#555" /></NameSelect>
              <SearchBox>Search Outline</SearchBox>
              <IconSlot $w={14}><svg width="12" height="7" viewBox="0 0 12 7"><path d="M1 6l5-5 5 5" fill="none" stroke="#d9a43a" strokeWidth="1.6" /></svg></IconSlot>
              <IconSlot $w={14}><CaretDown $c="#333" /></IconSlot>
            </ToolRow>
            <ToolRow $h={20}>
              <RowGrip />
              {['refresh', 'eraser', 'sort', 'plusBox', 'folder'].map(n => <IconSlot key={n} $w={18}><Glyph name={n} /></IconSlot>)}
              <IconSlot $w={18}>A<sub>Z</sub></IconSlot>
              <CaretDown $c="#333" />
            </ToolRow>
            <TreePane>
              {TREE.map((row, i) => <TreeRow key={i} row={row} />)}
              <HandCursor width="14" height="17" viewBox="0 0 14 17">
                <path d="M4 9V2.5a1.2 1.2 0 0 1 2.4 0V7l5 1.5q1.500.5 1 2L11.500 16H5L1.500 10.500q-.8-1.500 1-1.800z" fill="#fff" stroke="#333" strokeWidth=".9" />
              </HandCursor>
            </TreePane>
            <HScroll>
              <svg width="5" height="8" viewBox="0 0 5 8"><path d="M4 1L1 4l3 3" fill="none" stroke="#555" /></svg>
              <HThumb />
              <svg width="5" height="8" viewBox="0 0 5 8"><path d="M1 1l3 3-3 3" fill="none" stroke="#555" /></svg>
            </HScroll>
            <HeaderRow>
              <HeaderTitle $fill>Details of "Bonded - Multiple To Circular Model|Split1[4] - Contact Region"</HeaderTitle>
              <HeaderIcons auto />
            </HeaderRow>
            <DetailsWrap>
              <Gutter>
                {DETAILS.map((r, i) => <GutterCell key={i}>{r.section && <PlusBox />}</GutterCell>)}
              </Gutter>
              <PropTable>
                {DETAILS.map((r, i) => (r.section ? (
                  <PropRow key={i} $section><PropCell $bold>{r.section}</PropCell></PropRow>
                ) : (
                  <PropRow key={i}>
                    <PropCell>{r.k}</PropCell>
                    <PropCell $val {...(r.cell || {})}>{r.v}</PropCell>
                  </PropRow>
                )))}
              </PropTable>
              <VScroll>
                <svg width="8" height="5" viewBox="0 0 8 5"><path d="M1 4l3-3 3 3" fill="none" stroke="#555" /></svg>
                <VThumb />
                <svg width="8" height="5" viewBox="0 0 8 5"><path d="M1 1l3 3 3-3" fill="none" stroke="#555" /></svg>
              </VScroll>
            </DetailsWrap>
          </LeftCol>

          <CenterCol>
            <ViewToolbar $h={20}>
              <IconSlot $w={20}><Glyph name="zoom" /></IconSlot>
              <IconSlot $w={22}><Glyph name="zoomOff" /></IconSlot>
              <Highlight><Glyph name="cube" /></Highlight>
              {VIEW_TOOLS.map(([n, w], i) => <ToolGlyph key={i} name={n} w={w} />)}
              <IconSlot $w={42}>Select</IconSlot>
              <IconSlot $w={14}><Glyph name="mode" /></IconSlot>
              <IconSlot $w={28}>Mode</IconSlot>
              <IconSlot $w={8}><CaretDown $c="#666" /></IconSlot>
              {VIEW_TOOLS_2.map(([n, w], i) => <ToolGlyph key={i} name={n} w={w} />)}
              <Highlight><Glyph name="pageOn" /></Highlight>
              {VIEW_TOOLS_3.map(([n, w], i) => <ToolGlyph key={i} name={n} w={w} />)}
              <IconSlot $w={8}><CaretDown $c="#222" /></IconSlot>
            </ViewToolbar>
            <Viewport>
              <MainModel />
              <Caption>
                <CaptionTitle>Bonded - Multiple To Circular Model|Split1[4]</CaptionTitle>
                3/20/2026 4:55:36 PM
                <Legend>
                  <LegendRow><LegendSwatch $c="#d41f36" />Bonded - Multiple To Circular Model|Split1[4] (Contact Bodies)</LegendRow>
                  <LegendRow><LegendSwatch $c="#2e22e6" />Bonded - Multiple To Circular Model|Split1[4] (Target Bodies)</LegendRow>
                </Legend>
              </Caption>
              <Logo>
                <LogoName>Ansys</LogoName>
                <LogoYear>2025 R2</LogoYear>
                <LogoRule />
                <LogoEdition>TEACHING</LogoEdition>
              </Logo>
            </Viewport>
          </CenterCol>

          <RightCol>
            <HeaderRow>
              <HeaderTitle>Contact Body View</HeaderTitle>
              <Grip />
              <HeaderIcons />
            </HeaderRow>
            <Viewport $fixed={278}><ContactModel /></Viewport>
            <Gap />
            <HeaderRow>
              <HeaderTitle>Target Body View</HeaderTitle>
              <Grip />
              <HeaderIcons />
            </HeaderRow>
            <Viewport><TargetModel /></Viewport>
          </RightCol>
        </Main>

        <StatusBar>
          <StatusItem>Ready</StatusItem>
          <StatusItem $ml={753}>Messages pane</StatusItem>
          <StatusItem $ml={14}>No Selection</StatusItem>
          <UnitMark />
          <StatusItem>Metric (mm, kg, N, s, mV, mA)</StatusItem>
          <StatusItem $ml={10}>Degrees</StatusItem>
        </StatusBar>
      </Win>

      <MeetBar>
        <MeetBtn $w={48} $pl={17} $div><ChevronUp size={18} strokeWidth={2.2} /></MeetBtn>
        <MeetBtn $w={50} $pl={17} $div><Scan size={17} strokeWidth={1.6} /></MeetBtn>
        <MeetBtn $w={100} $pl={20}><CloudUpload size={19} strokeWidth={1.5} />Upload</MeetBtn>
        <MeetBtn $w={105} $pl={10} $div><CloudDownload size={19} strokeWidth={1.5} />Download</MeetBtn>
        <MeetBtn $w={127} $pl={20} $div>
          <svg width="17" height="14" viewBox="0 0 17 14">
            <rect x=".7" y=".7" width="15.6" height="12.6" rx="2" fill="none" stroke="#222" strokeWidth="1.3" />
            <path d="M8.5 10V4.5M6.3 6.500l2.200-2.200 2.200 2.200" fill="none" stroke="#222" strokeWidth="1.3" />
          </svg>
          Share screen
        </MeetBtn>
        <MeetBtn $w={88} $pl={20} $div><MessageSquare size={18} strokeWidth={1.5} />Chat</MeetBtn>
        <MeetBtn $w={105} $pl={18}>More<CaretDown $s={5} $c="#222" /></MeetBtn>
        <MeetRight>
          <svg width="20" height="20" viewBox="0 0 20 20" fill="#3f68a8">
            <rect x="0" y="14" width="3" height="6" /><rect x="4.2" y="11" width="3" height="9" /><rect x="8.4" y="8" width="3" height="12" /><rect x="12.6" y="4" width="3" height="16" /><rect x="16.8" y="0" width="3" height="20" />
          </svg>
          <Volume1 size={18} strokeWidth={1.7} />
          <CircleHelp size={18} strokeWidth={1.5} />
          <Settings size={18} strokeWidth={1.9} />
        </MeetRight>
      </MeetBar>
      <Messenger>Messenger</Messenger>
    </Screen>
  );
}
